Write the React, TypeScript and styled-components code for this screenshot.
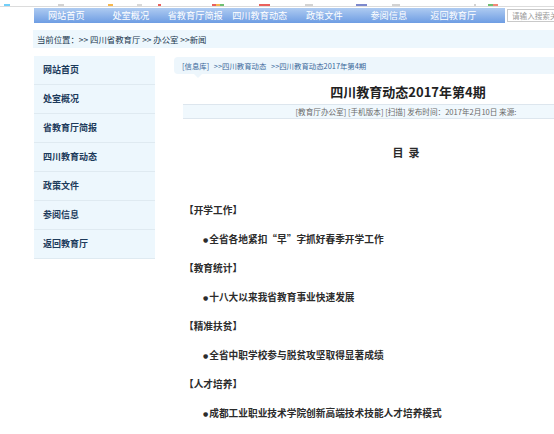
import React from "react";
import styled, { createGlobalStyle } from "styled-components";

const GlobalStyle = createGlobalStyle`
  html, body {
    margin: 0;
    padding: 0;
    overflow: hidden;
    background: #ffffff;
  }
  body {
    font-family: "Noto Sans CJK SC", "Noto Sans", sans-serif;
  }
`;

// the page is wider than the window; the right side is clipped
const Page = styled.div`
  width: 554px;
  overflow: hidden;
`;

// bottoms of the browser bookmark icons that got cut off above the page
const TopStrip = styled.div`
  position: relative;
  height: 6px;
  border-bottom: 1px solid #dcdcdc;
`;

const Chip = styled.span<{ $x: number; $w: number; $c: string }>`
  position: absolute;
  bottom: 0;
  left: ${(p) => p.$x}px;
  width: ${(p) => p.$w}px;
  height: 2px;
  background: ${(p) => p.$c};
  opacity: 0.8;
`;

const Header = styled.div`
  display: flex;
  align-items: center;
  padding-left: 34px;
  margin-top: 1px;
`;

const Nav = styled.nav`
  display: flex;
  flex: none;
  width: 471px;
  height: 15px;
  background: linear-gradient(#aecbf1, #6e9de3);
`;

const NavItem = styled.a`
  width: 64.5px;
  flex: none;
  text-align: center;
  color: #ffffff;
  font-size: 9.2px;
  line-height: 15px;
  text-decoration: none;
`;

const Search = styled.input`
  box-sizing: border-box;
  flex: none;
  margin-left: 2px;
  width: 60px;
  height: 13px;
  border: 1px solid #c9c9c9;
  padding: 0 0 0 4px;
  font-family: inherit;
  font-size: 7.6px;
  outline: none;
  &::placeholder {
    color: #9a9a9a;
  }
`;

const Crumbs = styled.div`
  margin: 7px 0 0 33px;
  height: 18px;
  line-height: 18px;
  padding-left: 4px;
  background: #edf7fd;
  color: #22384f;
  font-size: 8.4px;
`;

const Main = styled.div`
  display: flex;
  align-items: flex-start;
  padding-left: 34px;
  margin-top: 8px;
`;

const Sidebar = styled.ul`
  list-style: none;
  margin: 0;
  padding: 0;
  width: 121px;
  flex: none;
  background: #edf7fd;
`;

const SideItem = styled.li`
  height: 28px;
  line-height: 28px;
  padding-left: 9px;
  border-bottom: 1px solid #dfeaf1;
  color: #1c3a5b;
  font-size: 9px;
  font-weight: 700;
`;

const Content = styled.div`
  margin-left: 19px;
  margin-top: 1px;
  width: 464px;
  flex: none;
`;

const InfoBar = styled.div`
  position: relative;
  height: 17px;
  line-height: 17px;
  padding-left: 8px;
  border-radius: 4px;
  background: #edf6fc;
  color: #3a679a;
  font-size: 7.4px;
  word-spacing: 3px;
  &::after {
    content: "";
    position: absolute;
    left: 20px;
    top: 17px;
    border: 4px solid transparent;
    border-top-color: #edf6fc;
  }
`;

const Title = styled.h1`
  margin: 8px 0 0;
  padding-left: 4px;
  height: 20px;
  line-height: 20px;
  text-align: center;
  font-size: 13px;
  font-weight: 700;
  color: #222222;
`;

const Meta = styled.div`
  margin: 2px 0 0 9px;
  height: 13px;
  line-height: 13px;
  padding-right: 9px;
  text-align: center;
  background: #f0f8fd;
  border-top: 1px solid #dde6ee;
  border-bottom: 1px solid #dde6ee;
  color: #6a6a6a;
  font-size: 7.6px;
`;

const Catalog = styled.div`
  margin-top: 23px;
  height: 20px;
  line-height: 20px;
  text-align: center;
  font-size: 11px;
  font-weight: 700;
  color: #2a2a2a;
  white-space: pre;
`;

const List = styled.div`
  margin-top: 34px;
  padding-left: 10px;
`;

const Row = styled.p<{ $item?: boolean }>`
  margin: 0;
  height: 29px;
  line-height: 29px;
  padding-left: ${(p) => (p.$item ? "19px" : "0")};
  font-size: 9.7px;
  font-weight: 700;
  color: #2c2c2c;
`;

const Dot = styled.span`
  font-family: "DejaVu Sans", sans-serif;
  font-size: 6px;
  margin-right: 1px;
  vertical-align: 1px;
`;

const chips = [
  { x: 4, w: 6, c: "#4fc3f7" },
  { x: 58, w: 6, c: "#c8c8c8" },
  { x: 108, w: 5, c: "#f5a623" },
  { x: 137, w: 5, c: "#cfcfcf" },
  { x: 158, w: 3, c: "#e53935" },
  { x: 212, w: 4, c: "#e53935" },
  { x: 216, w: 4, c: "#f5a623" },
  { x: 220, w: 4, c: "#4caf50" },
  { x: 259, w: 11, c: "#e53935" },
  { x: 305, w: 8, c: "#c8c8c8" },
  { x: 356, w: 11, c: "#5c6bc0" },
  { x: 392, w: 8, c: "#c8c8c8" },
  { x: 474, w: 2, c: "#c8c8c8" },
  { x: 488, w: 5, c: "#4caf50" },
  { x: 493, w: 5, c: "#ef6c57" },
];

const navItems = [
  "网站首页",
  "处室概况",
  "省教育厅简报",
  "四川教育动态",
  "政策文件",
  "参阅信息",
  "返回教育厅",
];

const sections = [
  { head: "【开学工作】", item: "全省各地紧扣“早”字抓好春季开学工作" },
  { head: "【教育统计】", item: "十八大以来我省教育事业快速发展" },
  { head: "【精准扶贫】", item: "全省中职学校参与脱贫攻坚取得显著成绩" },
  { head: "【人才培养】", item: "成都工业职业技术学院创新高端技术技能人才培养模式" },
];

export default function App() {
  return (
    <Page>
      <GlobalStyle />
      <TopStrip>
        {chips.map((c, i) => (
          <Chip key={i} $x={c.x} $w={c.w} $c={c.c} />
        ))}
      </TopStrip>
      <Header>
        <Nav>
          {navItems.map((n) => (
            <NavItem key={n}>{n}</NavItem>
          ))}
        </Nav>
        <Search placeholder="请输入搜索关键字" />
      </Header>
      <Crumbs>当前位置：&gt;&gt; 四川省教育厅 &gt;&gt; 办公室 &gt;&gt;新闻</Crumbs>
      <Main>
        <Sidebar>
          {navItems.map((n) => (
            <SideItem key={n}>{n}</SideItem>
          ))}
        </Sidebar>
        <Content>
          <InfoBar>[信息库] &gt;&gt;四川教育动态 &gt;&gt;四川教育动态2017年第4期</InfoBar>
          <Title>四川教育动态2017年第4期</Title>
          <Meta>[教育厅办公室] [手机版本] [扫描] 发布时间：2017年2月10日 来源:</Meta>
          <Catalog>目  录</Catalog>
          <List>
            {sections.map((s) => (
              <React.Fragment key={s.head}>
                <Row>{s.head}</Row>
                <Row $item>
                  <Dot>●</Dot>
                  {s.item}
                </Row>
              </React.Fragment>
            ))}
          </List>
        </Content>
      </Main>
    </Page>
  );
}
